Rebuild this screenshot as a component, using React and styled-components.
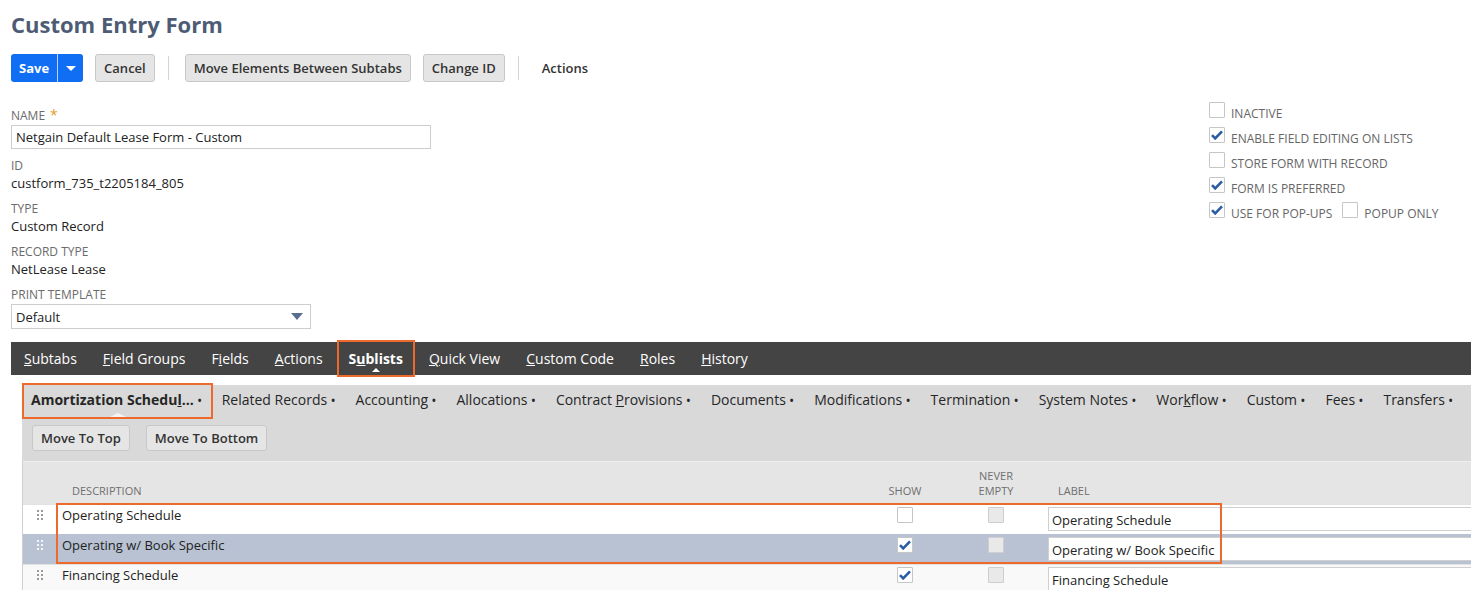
import React from "react";
import styled, { createGlobalStyle } from "styled-components";

const GlobalStyle = createGlobalStyle`
  html, body {
    margin: 0;
    padding: 0;
    background: #fff;
    overflow: hidden;
  }
  body {
    font-family: "Open Sans", "Liberation Sans", sans-serif;
    color: #222;
  }
`;

const Page = styled.div`
  padding: 10px 0 0 11px;
  width: 1460px;
`;

/* header + toolbar */
const Title = styled.h1`
  margin: 0;
  font-size: 22px;
  line-height: 28px;
  font-weight: 700;
  color: #4d5c74;
`;

const Toolbar = styled.div`
  display: flex;
  align-items: center;
  gap: 12px;
  margin-top: 16px;
  height: 28px;
`;

const SaveGroup = styled.div`
  display: flex;
  height: 28px;
  border-radius: 3px;
  overflow: hidden;
  background: #0f6ef3;
`;

const SavePart = styled.button`
  border: 0;
  background: transparent;
  color: #fff;
  font-family: inherit;
  font-weight: 700;
  font-size: 13px;
  padding: 0 ${(p) => (p.arrow ? "0" : "8px")};
  width: ${(p) => (p.arrow ? "26px" : "auto")};
  border-left: ${(p) => (p.arrow ? "1px solid #b8d2fb" : "0")};
  display: flex;
  align-items: center;
  justify-content: center;
`;

const Caret = styled.span`
  width: 0;
  height: 0;
  border-left: 5px solid transparent;
  border-right: 5px solid transparent;
  border-top: 5px solid #fff;
`;

const Button = styled.button`
  height: ${(p) => (p.small ? "26px" : "28px")};
  padding: 0 8px;
  background: #e5e5e5;
  border: 1px solid #c8c8c8;
  border-radius: 3px;
  color: #333;
  font-family: inherit;
  font-size: 13px;
  font-weight: 600;
`;

const Sep = styled.span`
  width: 1px;
  height: 24px;
  background: #d4d4d4;
  margin: 0 ${(p) => p.mr || "3px"} 0 1px;
`;

const PlainAction = styled.span`
  font-size: 13px;
  font-weight: 600;
  color: #333;
  padding: 0 11px;
`;

/* main form */
const FormArea = styled.div`
  display: flex;
  justify-content: space-between;
  margin-top: 18px;
`;

const LeftCol = styled.div`
  padding-top: 7px;
  width: 420px;
`;

const Field = styled.div`
  & + & {
    margin-top: 9px;
  }
`;

const Label = styled.div`
  font-size: 12px;
  line-height: 16px;
  color: #6b6b6b;
  text-transform: uppercase;
`;

const Star = styled.span`
  color: #e0a02a;
  margin-left: 5px;
  font-size: 14px;
`;

const Value = styled.div`
  font-size: 13px;
  line-height: 18px;
  color: #222;
`;

const Input = styled.div`
  margin-top: 1px;
  width: ${(p) => p.w || "420px"};
  height: ${(p) => (p.select ? "25px" : "24px")};
  box-sizing: border-box;
  border: 1px solid #cdcdcd;
  padding: 0 4px;
  font-size: 13px;
  display: flex;
  align-items: center;
  justify-content: space-between;
  color: #222;
`;

const SelectCaret = styled.span`
  width: 0;
  height: 0;
  border-left: 6px solid transparent;
  border-right: 6px solid transparent;
  border-top: 7px solid #5a6f8f;
  margin-right: 3px;
`;

const RightCol = styled.div`
  width: 262px;
  padding-top: 2px;
`;

const CheckRow = styled.div`
  display: flex;
  align-items: flex-start;
  height: 25px;
`;

const CheckText = styled.span`
  font-size: 12px;
  line-height: 16px;
  padding-top: 4px;
  margin-left: 6px;
  color: #666;
  text-transform: uppercase;
  margin-right: 10px;
`;

const Box = styled.span`
  width: 16px;
  height: 16px;
  box-sizing: border-box;
  border: 1px solid ${(p) => (p.disabled ? "#cfcfcf" : "#c6c6c6")};
  background: ${(p) => (p.disabled ? "#e9e9e9" : "#fff")};
  border-radius: 1px;
  display: inline-flex;
  align-items: center;
  justify-content: center;
  flex: none;
`;

function Check({ checked, disabled }) {
  return (
    <Box disabled={disabled}>
      {checked && (
        <svg width="12" height="10" viewBox="0 0 12 10">
          <path d="M1 5.2 L4.2 8.4 L11 1.4" fill="none" stroke="#2b5ca6" strokeWidth="2.6" />
        </svg>
      )}
    </Box>
  );
}

/* dark tab strip */
const TabBar = styled.div`
  margin-top: 13px;
  height: 33px;
  background: #444;
  display: flex;
  align-items: stretch;
`;

const Tab = styled.div`
  position: relative;
  display: flex;
  align-items: center;
  padding: 0 ${(p) => (p.active ? "10px" : "13px")};
  margin: 0 ${(p) => (p.active ? "3px" : "0")};
  color: #fff;
  font-size: 14px;
  font-weight: ${(p) => (p.active ? 700 : 400)};
  outline: ${(p) => (p.active ? "2px solid #ee6a2c" : "none")};
  &::after {
    content: "";
    display: ${(p) => (p.active ? "block" : "none")};
    position: absolute;
    left: 50%;
    bottom: 3px;
    margin-left: -4px;
    border-left: 4px solid transparent;
    border-right: 4px solid transparent;
    border-bottom: 4px solid #fff;
  }
`;

/* sublist area */
const SubArea = styled.div`
  margin: 10px 0 0 11px;
  background: #d9d9d9;
`;

const SubTabs = styled.div`
  display: flex;
  height: 32px;
  align-items: stretch;
  white-space: nowrap;
`;

const SubTab = styled.div`
  position: relative;
  display: flex;
  align-items: center;
  padding: ${(p) => (p.active ? "0 10px 3px 7px" : "0 10.3px 3px")};
  margin-left: ${(p) => (p.active ? "2px" : "0")};
  font-size: 14px;
  color: #262626;
  font-weight: ${(p) => (p.active ? 700 : 400)};
  outline: ${(p) => (p.active ? "2px solid #ee6a2c" : "none")};
  &::after {
    content: "";
    display: ${(p) => (p.active ? "block" : "none")};
    position: absolute;
    left: 50%;
    bottom: 0;
    margin-left: -8px;
    border-left: 8px solid transparent;
    border-right: 8px solid transparent;
    border-bottom: 4px solid #f4f4f4;
  }
`;

const TabText = styled.span`
  white-space: pre;
`;

const Dot = styled.span`
  font-size: 10px;
  margin-left: 4px;
  font-weight: 700;
`;

const MoveRow = styled.div`
  display: flex;
  gap: 16px;
  padding: 8px 10px 10px;
`;

/* table */
const Table = styled.div`
  background: #fff;
  border-left: 1px solid #cfcfcf;
  position: relative;
`;

const cols = "33px 813px 72px 110px 1fr";

const HeadRow = styled.div`
  display: grid;
  grid-template-columns: ${cols};
  height: 43px;
  background: #e5e5e5;
  border-top: 1px solid #efefef;
  box-sizing: border-box;
`;

const HeadCell = styled.div`
  display: flex;
  align-items: flex-end;
  justify-content: ${(p) => (p.center ? "center" : "flex-start")};
  text-align: ${(p) => (p.center ? "center" : "left")};
  padding-bottom: 6px;
  padding-left: ${(p) => p.pl || "0"};
  font-size: 11px;
  line-height: 15px;
  color: #6f6f6f;
  text-transform: uppercase;
`;

const Row = styled.div`
  display: grid;
  grid-template-columns: ${cols};
  height: 30px;
  align-items: start;
  padding-top: 1px;
  background: ${(p) => (p.selected ? "#b8c2d3" : p.alt ? "#f9f9f9" : "#fff")};
  border-top: 1px solid ${(p) => (p.selected ? "#b8c2d3" : "#e2e2e2")};
  box-sizing: border-box;
`;

const Cell = styled.div`
  display: flex;
  align-items: center;
  justify-content: ${(p) => (p.center ? "center" : "flex-start")};
  padding-left: ${(p) => p.pl || "0"};
  padding-top: ${(p) => p.pt || "0"};
  font-size: 13px;
  line-height: 18px;
  color: #222;
  white-space: nowrap;
`;

const LabelInput = styled.div`
  margin-left: -3px;
  width: 460px;
  height: 24px;
  box-sizing: border-box;
  border: 1px solid #cfcfcf;
  background: #fff;
  padding: 2px 3px 0;
  font-size: 13px;
  display: flex;
  align-items: center;
`;

const Highlight = styled.div`
  position: absolute;
  left: 33px;
  top: 42px;
  width: 1166px;
  height: 61px;
  box-sizing: border-box;
  border: 2px solid #ee6a2c;
  pointer-events: none;
`;

function Grip({ light }) {
  const c = light ? "#f2f4f8" : "#9a9a9a";
  return (
    <svg width="6" height="10" viewBox="0 0 6 10">
      {[0, 4, 8].map((y) =>
        [0, 4].map((x) => <rect key={x + "-" + y} x={x} y={y} width="2" height="2" fill={c} />)
      )}
    </svg>
  );
}

const mainTabs = [
  ["", "S", "ubtabs"],
  ["", "F", "ield Groups"],
  ["F", "i", "elds"],
  ["", "A", "ctions"],
  ["S", "u", "blists", true],
  ["", "Q", "uick View"],
  ["", "C", "ustom Code"],
  ["", "R", "oles"],
  ["", "H", "istory"],
];

const subTabs = [
  ["Related Records"],
  ["Accounting"],
  ["Allocations"],
  ["Contract ", "P", "rovisions"],
  ["Documents"],
  ["Modifications"],
  ["Termination"],
  ["System Notes"],
  ["Wor", "k", "flow"],
  ["Custom"],
  ["Fees"],
  ["Transfers"],
];

const rows = [
  { name: "Operating Schedule", show: false },
  { name: "Operating w/ Book Specific", show: true, selected: true },
  { name: "Financing Schedule", show: true, alt: true },
];

export default function App() {
  return (
    <>
      <GlobalStyle />
      <Page>
        <Title>Custom Entry Form</Title>
        <Toolbar>
          <SaveGroup>
            <SavePart>Save</SavePart>
            <SavePart arrow>
              <Caret />
            </SavePart>
          </SaveGroup>
          <Button>Cancel</Button>
          <Sep mr="4px" />
          <Button>Move Elements Between Subtabs</Button>
          <Button>Change ID</Button>
          <Sep mr="0px" />
          <PlainAction>Actions</PlainAction>
        </Toolbar>

        <FormArea>
          <LeftCol>
            <Field>
              <Label>
                Name<Star>*</Star>
              </Label>
              <Input>Netgain Default Lease Form - Custom</Input>
            </Field>
            <Field>
              <Label>ID</Label>
              <Value>custform_735_t2205184_805</Value>
            </Field>
            <Field>
              <Label>Type</Label>
              <Value>Custom Record</Value>
            </Field>
            <Field>
              <Label>Record Type</Label>
              <Value>NetLease Lease</Value>
            </Field>
            <Field>
              <Label>Print Template</Label>
              <Input select w="300px">
                Default
                <SelectCaret />
              </Input>
            </Field>
          </LeftCol>
          <RightCol>
            <CheckRow>
              <Check />
              <CheckText>Inactive</CheckText>
            </CheckRow>
            <CheckRow>
              <Check checked />
              <CheckText>Enable field editing on lists</CheckText>
            </CheckRow>
            <CheckRow>
              <Check />
              <CheckText>Store form with record</CheckText>
            </CheckRow>
            <CheckRow>
              <Check checked />
              <CheckText>Form is preferred</CheckText>
            </CheckRow>
            <CheckRow>
              <Check checked />
              <CheckText>Use for pop-ups</CheckText>
              <Check />
              <CheckText>Popup only</CheckText>
            </CheckRow>
          </RightCol>
        </FormArea>

        <TabBar>
          {mainTabs.map((t, i) => (
            <Tab key={i} active={t[3]}>
              <TabText>
                {t[0]}
                <u>{t[1]}</u>
                {t[2]}
              </TabText>
            </Tab>
          ))}
        </TabBar>

        <SubArea>
          <SubTabs>
            <SubTab active>
              <TabText>
                Amortization Schedu<u>l</u>...
              </TabText>
              <Dot>•</Dot>
            </SubTab>
            {subTabs.map((t, i) => (
              <SubTab key={i}>
                <TabText>
                  {t[0]}
                  {t[1] && <u>{t[1]}</u>}
                  {t[2]}
                </TabText>
                <Dot>•</Dot>
              </SubTab>
            ))}
          </SubTabs>
          <MoveRow>
            <Button small>Move To Top</Button>
            <Button small>Move To Bottom</Button>
          </MoveRow>
          <Table>
            <HeadRow>
              <HeadCell />
              <HeadCell pl="16px">Description</HeadCell>
              <HeadCell center>Show</HeadCell>
              <HeadCell center>
                Never
                <br />
                Empty
              </HeadCell>
              <HeadCell pl="7px">Label</HeadCell>
            </HeadRow>
            {rows.map((r) => (
              <Row key={r.name} selected={r.selected} alt={r.alt}>
                <Cell center pt="4px">
                  <Grip light={r.selected} />
                </Cell>
                <Cell pl="6px">{r.name}</Cell>
                <Cell center pt="1px">
                  <Check checked={r.show} />
                </Cell>
                <Cell center pt="1px">
                  <Check disabled />
                </Cell>
                <Cell pt="1px">
                  <LabelInput>{r.name}</LabelInput>
                </Cell>
              </Row>
            ))}
            <Highlight />
          </Table>
        </SubArea>
      </Page>
    </>
  );
}
